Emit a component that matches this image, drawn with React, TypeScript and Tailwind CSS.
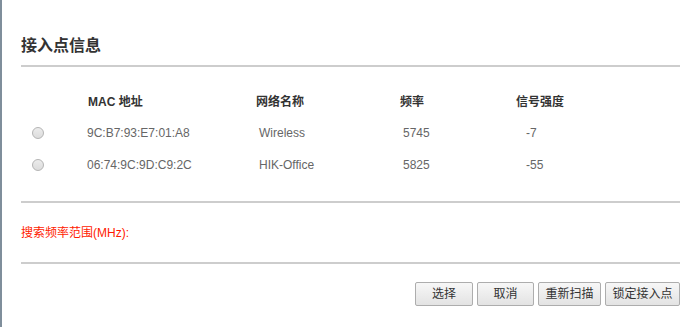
import React from "react";

interface ApRow {
  mac: string;
  ssid: string;
  freq: string;
  signal: string;
}

const rows: ApRow[] = [
  { mac: "9C:B7:93:E7:01:A8", ssid: "Wireless", freq: "5745", signal: "-7" },
  { mac: "06:74:9C:9D:C9:2C", ssid: "HIK-Office", freq: "5825", signal: "-55" },
];

const latin = "font-['Liberation_Sans','Noto_Sans_CJK_SC',sans-serif]";

function Btn({ label, w }: { label: string; w: string }) {
  return (
    <button
      className={`${w} h-[24px] border border-[#adadad] rounded-[2px] bg-gradient-to-b from-[#f7f7f7] to-[#e3e3e3] text-[12px] text-[#333] leading-none`}
    >
      {label}
    </button>
  );
}

export default function App() {
  return (
    <div className={`w-[697px] h-[327px] bg-white border-l-2 border-[#7f8e9b] pl-[19px] pr-[17px] ${latin}`}>
      <div className="pt-[34px] h-[58px] text-[16px] leading-[24px] font-bold text-[#333]">接入点信息</div>
      <div className="mt-[7px] border-t-2 border-[#cdcdcd]" />

      {/* AP list */}
      <div className="mt-[20px] grid grid-cols-[67px_168px_144px_116px_1fr] h-[30px] items-center text-[12px] font-bold text-[#333]">
        <div />
        <div>MAC 地址</div>
        <div>网络名称</div>
        <div>频率</div>
        <div>信号强度</div>
      </div>
      {rows.map((r) => (
        <div
          key={r.mac}
          className="grid grid-cols-[67px_168px_144px_116px_1fr] h-[32px] items-center text-[12px] text-[#666]"
        >
          <div className="pl-[11px]">
            <span className="block w-[12px] h-[12px] rounded-full border border-[#b4b4b4] bg-gradient-to-b from-[#ececec] to-[#dcdcdc]" />
          </div>
          <div className="-ml-px">{r.mac}</div>
          <div className="pl-[3px]">{r.ssid}</div>
          <div className="pl-[3px]">{r.freq}</div>
          <div className="pl-[10px]">{r.signal}</div>
        </div>
      ))}

      <div className="mt-[20px] border-t-2 border-[#cdcdcd]" />
      <div className="mt-[20px] h-[20px] leading-[20px] text-[12px] text-[#ff1a00]">搜索频率范围(MHz):</div>
      <div className="mt-[19px] border-t-2 border-[#cdcdcd]" />

      <div className="mt-[18px] flex justify-end gap-[4px]">
        <Btn label="选择" w="w-[58px]" />
        <Btn label="取消" w="w-[57px]" />
        <Btn label="重新扫描" w="w-[63px]" />
        <Btn label="锁定接入点" w="w-[75px]" />
      </div>
    </div>
  );
}
